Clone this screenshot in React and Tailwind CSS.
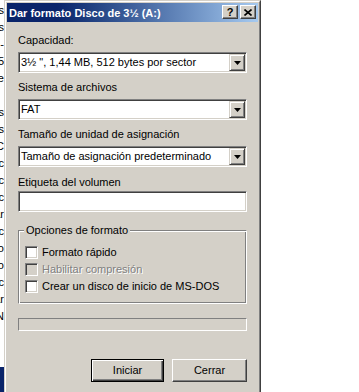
import React from "react";

const sunken =
  "border border-t-[#808080] border-l-[#808080] border-r-white border-b-white shadow-[inset_1px_1px_0_#404040,inset_-1px_-1px_0_#d4d0c8]";
const btnRaised =
  "border border-t-white border-l-white border-r-[#404040] border-b-[#404040] shadow-[inset_-1px_-1px_0_#808080]";
const dropRaised =
  "border border-t-[#d4d0c8] border-l-[#d4d0c8] border-r-[#404040] border-b-[#404040] shadow-[inset_1px_1px_0_#fff,inset_-1px_-1px_0_#808080]";

function Combo({ text }) {
  return (
    <div className={`h-[21px] bg-white flex p-[1px] ${sunken}`}>
      <div className="flex-1 flex items-center pl-[1px] text-black whitespace-nowrap overflow-hidden">
        {text}
      </div>
      <div className={`w-[16px] h-full bg-[#d4d0c8] flex items-center justify-center ${dropRaised}`}>
        <svg width="7" height="4" viewBox="0 0 7 4">
          <path d="M0 0h7L3.5 4z" fill="#000" />
        </svg>
      </div>
    </div>
  );
}

function Check({ label, disabled }) {
  return (
    <div className="h-[17px] flex items-center gap-[4px]">
      <div className={`w-[13px] h-[13px] ${disabled ? "bg-[#d4d0c8]" : "bg-white"} ${sunken}`} />
      <span
        className={
          disabled
            ? "text-[#808080] [text-shadow:1px_1px_0_#fff] whitespace-nowrap"
            : "text-black whitespace-nowrap"
        }
      >
        {label}
      </span>
    </div>
  );
}

const bgLines = ["Discos", "Tareas", "-", "3.5", "Acceso de", "", "Discos", "Discos", "LC", "Grafic", "Grafic", "Grafic", "Buscar", "Grafic", "Disco", "Disco", "Grafic", "Ayudar", "MN"];

export default function App() {
  return (
    <div className="w-[359px] h-[392px] bg-white flex overflow-hidden font-['Liberation_Sans',Arial,sans-serif] text-[11px] leading-[13px]">
      {/* background window fragment */}
      <div className="w-[4px] h-full flex flex-col overflow-hidden">
        <div className="flex flex-col pt-[2px]">
          {bgLines.map((t, i) => (
            <div key={i} className="h-[17px] flex justify-end items-center whitespace-nowrap text-black">
              {t}
            </div>
          ))}
        </div>
        <div className="mt-auto h-[25px] bg-[#0a246a]" />
      </div>

      {/* dialog */}
      <div className="w-[257px] h-full border-l border-t border-r border-l-[#d4d0c8] border-t-[#d4d0c8] border-r-[#404040]">
        <div className="h-full border-l border-t border-r border-l-white border-t-white border-r-[#808080] p-[1px] bg-[#d4d0c8] flex flex-col">
          {/* title bar */}
          <div className="h-[19px] bg-linear-to-r from-[#0a246a] from-20% to-[#a6caf0] flex items-start pt-[2px] pl-[2px] pr-[2px]">
            <span className="flex-1 mt-[2px] text-white font-bold whitespace-nowrap">
              Dar formato Disco de 3½ (A:)
            </span>
            <div className={`w-[16px] h-[14px] bg-[#d4d0c8] flex items-center justify-center ${btnRaised}`}>
              <span className="font-bold text-black text-[11px] leading-[11px]">?</span>
            </div>
            <div className={`ml-[2px] w-[16px] h-[14px] bg-[#d4d0c8] flex items-center justify-center ${btnRaised}`}>
              <svg width="8" height="7" viewBox="0 0 8 7">
                <path d="M0.5 0.5L7.5 6.5M7.5 0.5L0.5 6.5" stroke="#000" strokeWidth="1.6" />
              </svg>
            </div>
          </div>

          {/* content */}
          <div className="flex flex-col px-[11px] text-black">
            <div className="mt-[12px] h-[13px]">Capacidad:</div>
            <div className="mt-[5px]">
              <Combo text={'3½ ", 1,44 MB, 512 bytes por sector'} />
            </div>
            <div className="mt-[8px] h-[13px]">Sistema de archivos</div>
            <div className="mt-[5px]">
              <Combo text="FAT" />
            </div>
            <div className="mt-[8px] h-[13px]">Tamaño de unidad de asignación</div>
            <div className="mt-[5px]">
              <Combo text="Tamaño de asignación predeterminado" />
            </div>
            <div className="mt-[9px] h-[13px]">Etiqueta del volumen</div>
            <div className={`mt-[2px] h-[21px] bg-white ${sunken}`} />

            <div className="relative mt-[18px] h-[74px] border border-t-[#808080] border-l-[#808080] border-r-white border-b-white shadow-[inset_1px_1px_0_#fff,inset_-1px_-1px_0_#808080] pt-[13px] pl-[6px]">
              <span className="absolute -top-[7px] left-[5px] px-[2px] bg-[#d4d0c8] whitespace-nowrap">
                Opciones de formato
              </span>
              <Check label="Formato rápido" />
              <Check label="Habilitar compresión" disabled />
              <Check label="Crear un disco de inicio de MS-DOS" />
            </div>

            <div className="mt-[14px] h-[13px] border border-t-[#808080] border-l-[#808080] border-r-white border-b-white" />

            <div className="mt-[28px] flex justify-end gap-[8px]">
              <div className="w-[73px] h-[23px] border border-black shadow-[inset_1px_1px_0_#fff,inset_-1px_-1px_0_#404040,inset_-2px_-2px_0_#808080] flex items-center justify-center">
                Iniciar
              </div>
              <div className={`w-[75px] h-[23px] flex items-center justify-center ${btnRaised}`}>
                Cerrar
              </div>
            </div>
          </div>
        </div>
      </div>
    </div>
  );
}
